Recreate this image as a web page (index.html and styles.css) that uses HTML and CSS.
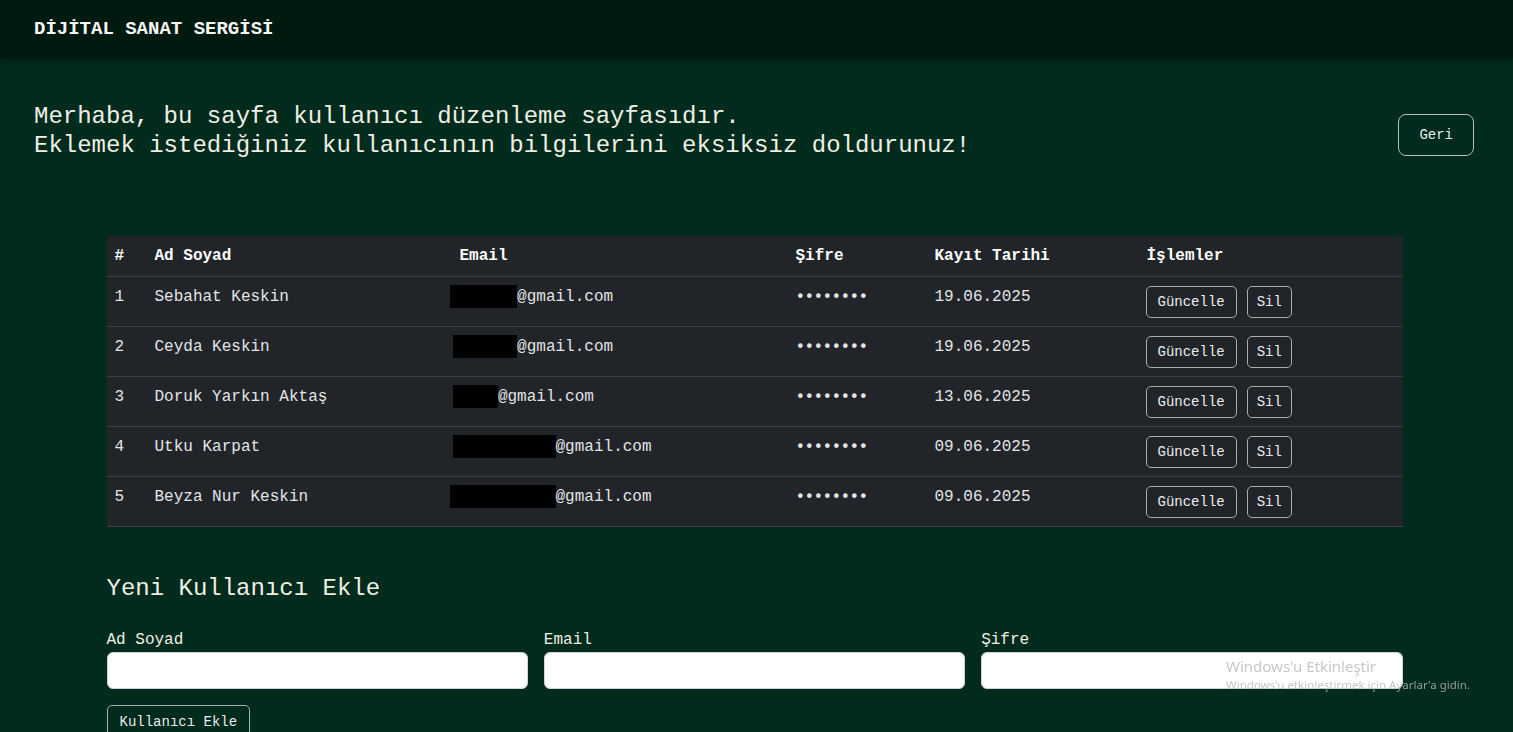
FILE: index.html
```html
<!DOCTYPE html>
<html lang="tr">
<head>
<meta charset="utf-8">
<title>Dijital Sanat Sergisi - Kullanıcılar</title>
<link rel="stylesheet" href="styles.css">
</head>
<body>
<header class="topbar">
  <span class="brand">DİJİTAL SANAT SERGİSİ</span>
</header>
<main class="page">
  <section class="intro">
    <h4 class="intro-text">Merhaba, bu sayfa kullanıcı düzenleme sayfasıdır.<br>Eklemek istediğiniz kullanıcının bilgilerini eksiksiz doldurunuz!</h4>
    <button class="btn btn-back">Geri</button>
  </section>

  <div class="container">
    <table class="users">
      <thead>
        <tr>
          <th class="c-no">#</th>
          <th class="c-name">Ad Soyad</th>
          <th class="c-mail">Email</th>
          <th class="c-pass">Şifre</th>
          <th class="c-date">Kayıt Tarihi</th>
          <th class="c-act">İşlemler</th>
        </tr>
      </thead>
      <tbody>
        <tr>
          <td>1</td>
          <td>Sebahat Keskin</td>
          <td><span class="redact r1">xxxxxx</span>@gmail.com</td>
          <td class="dots">••••••••</td>
          <td>19.06.2025</td>
          <td><div class="actions"><button class="btn btn-sm">Güncelle</button><button class="btn btn-sm btn-del">Sil</button></div></td>
        </tr>
        <tr>
          <td>2</td>
          <td>Ceyda Keskin</td>
          <td><span class="redact r2">xxxxxx</span>@gmail.com</td>
          <td class="dots">••••••••</td>
          <td>19.06.2025</td>
          <td><div class="actions"><button class="btn btn-sm">Güncelle</button><button class="btn btn-sm btn-del">Sil</button></div></td>
        </tr>
        <tr>
          <td>3</td>
          <td>Doruk Yarkın Aktaş</td>
          <td><span class="redact r2">xxxx</span>@gmail.com</td>
          <td class="dots">••••••••</td>
          <td>13.06.2025</td>
          <td><div class="actions"><button class="btn btn-sm">Güncelle</button><button class="btn btn-sm btn-del">Sil</button></div></td>
        </tr>
        <tr>
          <td>4</td>
          <td>Utku Karpat</td>
          <td><span class="redact r2">xxxxxxxxxx</span>@gmail.com</td>
          <td class="dots">••••••••</td>
          <td>09.06.2025</td>
          <td><div class="actions"><button class="btn btn-sm">Güncelle</button><button class="btn btn-sm btn-del">Sil</button></div></td>
        </tr>
        <tr>
          <td>5</td>
          <td>Beyza Nur Keskin</td>
          <td><span class="redact r1">xxxxxxxxxx</span>@gmail.com</td>
          <td class="dots">••••••••</td>
          <td>09.06.2025</td>
          <td><div class="actions"><button class="btn btn-sm">Güncelle</button><button class="btn btn-sm btn-del">Sil</button></div></td>
        </tr>
      </tbody>
    </table>

    <h4 class="form-title">Yeni Kullanıcı Ekle</h4>
    <form class="add-form">
      <div class="field">
        <label class="form-label">Ad Soyad</label>
        <input class="form-control" type="text">
      </div>
      <div class="field">
        <label class="form-label">Email</label>
        <input class="form-control" type="email">
      </div>
      <div class="field">
        <label class="form-label">Şifre</label>
        <input class="form-control" type="password">
      </div>
    </form>
    <button class="btn btn-add">Kullanıcı Ekle</button>
  </div>
</main>

<div class="watermark">
  <div class="wm-title">Windows'u Etkinleştir</div>
  <div class="wm-sub">Windows'u etkinleştirmek için Ayarlar'a gidin.</div>
</div>
</body>
</html>
```
FILE: styles.css
```css
* { box-sizing: border-box; }

html, body {
  margin: 0;
  padding: 0;
}

body {
  background: #002b1d;
  color: #e9ecef;
  font-family: "Liberation Mono", "Courier New", monospace;
  font-size: 16px;
  line-height: 1.5;
  min-height: 100vh;
  overflow: hidden;
}

.topbar {
  height: 58px;
  background: #011a10;
  padding: 15px 34px 0;
  box-shadow: 0 2px 8px rgba(0, 0, 0, 0.45);
  position: relative;
  z-index: 1;
}

.brand {
  font-weight: bold;
  font-size: 19px;
  line-height: 28px;
  color: #f5f5f5;
}

.intro {
  display: flex;
  justify-content: space-between;
  align-items: center;
  margin-top: 45px;
  padding: 0 39px 0 34px;
}

.intro-text {
  margin: 0;
  font-weight: normal;
  font-size: 24px;
  line-height: 28.8px;
  color: #f0efe4;
}

.btn {
  font-family: "Liberation Mono", "Courier New", monospace;
  background: transparent;
  color: #e9ecef;
  border: 1px solid #a9aeaa;
  cursor: pointer;
}

.btn-back {
  font-size: 14px;
  line-height: 20px;
  padding: 10px 20px;
  border-radius: 8px;
  border-color: #b8bfb9;
  margin-top: 6px;
}

.container {
  width: 1296px;
  margin: 75px auto 0 calc(50% - 650px);
}

.users {
  width: 100%;
  border-collapse: collapse;
  background: #212529;
}

.users th,
.users td {
  padding: 8px;
  text-align: left;
  vertical-align: top;
  border-bottom: 1px solid #3b3f43;
}

.users th {
  font-weight: bold;
  color: #ffffff;
}

.users td {
  color: #e2e4e6;
}

.c-no { width: 40px; }
.c-name { width: 305px; }
.c-mail { width: 336px; }
.c-pass { width: 139px; }
.c-date { width: 212px; }

.dots {
  font-weight: bold;
  letter-spacing: -0.6px;
}

.redact {
  display: inline-block;
  background: #000;
  color: #000;
  line-height: 23px;
  height: 23px;
  vertical-align: top;
}

.redact.r1 {
  margin-left: -10px;
  padding-left: 10px;
}

.redact.r2 {
  margin-left: -7px;
  padding-left: 7px;
}

.actions {
  display: flex;
  gap: 10px;
  padding-top: 1px;
  margin-left: -1px;
}

.btn-sm {
  font-size: 14px;
  line-height: 22px;
  padding: 4px 11px;
  border-radius: 5px;
}

.btn-del {
  padding: 4px 9px;
}

.form-title {
  margin: 48px 0 0;
  font-weight: normal;
  font-size: 24px;
  line-height: 28.8px;
  color: #f0efe4;
}

.add-form {
  display: grid;
  grid-template-columns: repeat(3, 1fr);
  column-gap: 16px;
  margin-top: 25px;
}

.field {
  display: flex;
  flex-direction: column;
}

.form-label {
  font-size: 16px;
  line-height: 24px;
  margin-bottom: 0;
  color: #f0efe4;
}

.form-control {
  height: 37px;
  border: 1px solid #ced4da;
  border-radius: 6px;
  background: #ffffff;
  padding: 6px 12px;
  font-size: 16px;
  font-family: "Liberation Mono", "Courier New", monospace;
}

.btn-add {
  margin-top: 16px;
  font-size: 14px;
  line-height: 22px;
  padding: 5px 12px;
  border-radius: 5px;
}

.watermark {
  position: fixed;
  left: 1226px;
  top: 655px;
  font-family: "Noto Sans", "Open Sans", sans-serif;
  color: rgba(185, 185, 185, 0.8);
  pointer-events: none;
  z-index: 5;
}

.wm-title {
  font-size: 15px;
  line-height: 22px;
}

.wm-sub {
  font-size: 11.5px;
  line-height: 16px;
}
```
